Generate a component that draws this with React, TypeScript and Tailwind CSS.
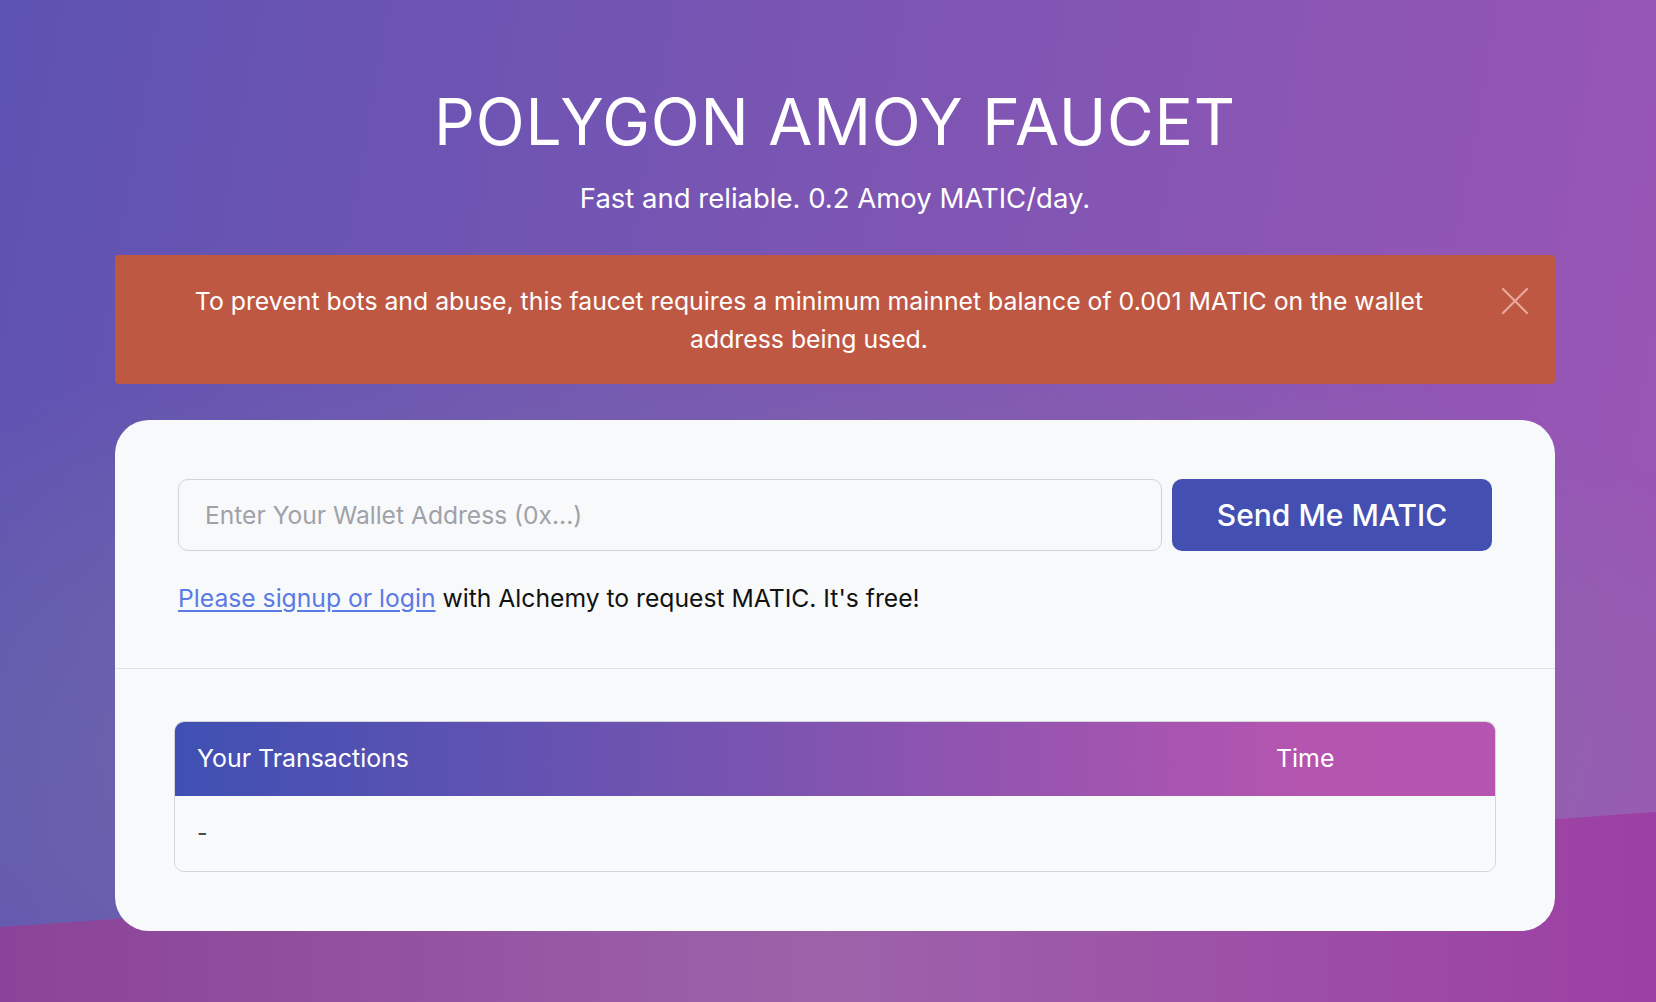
import { useState } from 'react';

function CloseIcon() {
  return (
    <svg width="28" height="28" viewBox="0 0 28 28" fill="none" stroke="currentColor" strokeWidth="2.2" strokeLinecap="round">
      <path d="M2 2L26 26M26 2L2 26" />
    </svg>
  );
}

export default function App() {
  const [showAlert, setShowAlert] = useState(true);
  const [address, setAddress] = useState('');

  return (
    <div
      className="relative min-h-screen overflow-hidden bg-[linear-gradient(100deg,#5d53b2_0%,#7a55b3_45%,#9c56b5_100%)]"
      style={{ fontFamily: 'Inter, "Noto Sans", sans-serif' }}
    >
      {/* greyish glow in the middle of the background */}
      <div className="pointer-events-none absolute inset-0 bg-[radial-gradient(ellipse_70%_45%_at_45%_75%,rgba(120,150,150,0.45),rgba(120,150,150,0)_100%)]" />
      {/* bottom slanted band */}
      <svg className="pointer-events-none absolute inset-0 h-full w-full" viewBox="0 0 1656 1002" preserveAspectRatio="none">
        <defs>
          <linearGradient id="band" x1="0" y1="0" x2="1" y2="0">
            <stop offset="0" stopColor="#8a4398" />
            <stop offset="0.5" stopColor="#9d62aa" />
            <stop offset="1" stopColor="#9c3fa4" />
          </linearGradient>
        </defs>
        <polygon points="0,927 1656,812 1656,1002 0,1002" fill="url(#band)" />
      </svg>

      <div className="relative ml-[115px] flex w-[1440px] flex-col items-center pt-[82px]">
        <h1 className="text-[64px] leading-[80px] font-normal tracking-[0.012em] text-white">POLYGON AMOY FAUCET</h1>
        <p className="mt-[19px] text-[27.5px] leading-[34px] text-white">Fast and reliable. 0.2 Amoy MATIC/day.</p>

        {showAlert && (
          <div className="relative mt-[40px] flex h-[129px] w-full items-center justify-center rounded-[4px] bg-[#bf5843] pl-[50px] pr-[102px]">
            <p className="text-center text-[24.8px] leading-[38px] text-white">
              To prevent bots and abuse, this faucet requires a minimum mainnet balance of 0.001 MATIC on the wallet address being used.
            </p>
            <button
              onClick={() => setShowAlert(false)}
              className="absolute right-[26px] top-[32px] text-[#e6a99b]"
              aria-label="Close"
            >
              <CloseIcon />
            </button>
          </div>
        )}

        <div className="mt-[36px] w-full rounded-[34px] bg-[#f8f9fb]">
          <div className="px-[63px] pt-[59px] pb-[54px]">
            <div className="flex gap-[10px]">
              <input
                value={address}
                onChange={e => setAddress(e.target.value)}
                placeholder="Enter Your Wallet Address (0x...)"
                className="h-[72px] flex-1 rounded-[10px] border border-[#d2d3d8] bg-[#f8f9fb] px-[26px] text-[24.6px] text-[#333] outline-none placeholder:text-[#9fa2a8]"
              />
              <button className="h-[72px] w-[320px] rounded-[10px] bg-[#4450b1] text-[30px] font-medium text-white">
                Send Me MATIC
              </button>
            </div>
            <p className="mt-[31px] text-[24.7px] leading-[32px] text-[#111]">
              <a href="#" className="text-[#5a7ae6] underline underline-offset-[3px]">Please signup or login</a> with Alchemy to request MATIC. It's free!
            </p>
          </div>

          <div className="h-px bg-[#e1e2e6]" />

          <div className="px-[59px] pt-[52px] pb-[59px]">
            <div className="overflow-hidden rounded-[10px] border border-[#d4d5da]">
              <div className="flex h-[74px] items-center bg-[linear-gradient(90deg,#3f50b3_0%,#7b54b0_45%,#b455b0_85%,#b655b1_100%)] pl-[22px] text-[24.9px] text-white">
                <span className="flex-1">Your Transactions</span>
                <span className="w-[219px]">Time</span>
              </div>
              <div className="flex h-[75px] items-center bg-[#f8f9fb] pl-[22px] text-[23px] text-[#444]">
                -
              </div>
            </div>
          </div>
        </div>
      </div>
    </div>
  );
}
